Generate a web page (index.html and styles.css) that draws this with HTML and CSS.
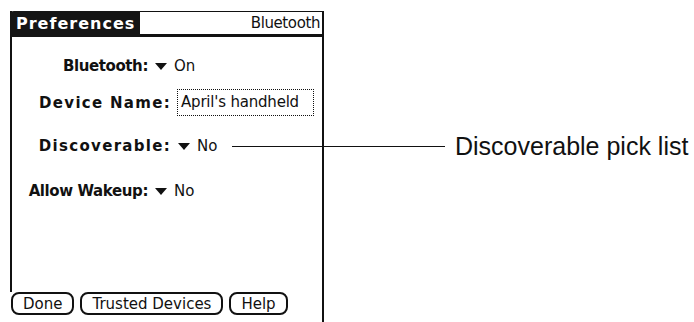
FILE: index.html
```html
<!DOCTYPE html>
<html>
  <head>
    <title>Preferences - Bluetooth</title>
    <link rel="stylesheet" href="styles.css">
  </head>
  <body>
    <div class="page">
      <div class="device">
        <section class="screen">
          <header class="titlebar">
            <h1 class="tab">Preferences</h1>
            <p class="app-name">Bluetooth</p>
          </header>

          <div class="fields">
            <div class="row row-bluetooth">
              <span class="label narrow">Bluetooth:</span>
              <svg class="arrow" width="12" height="7" viewBox="0 0 12 7"><path d="M0 0h12L6 7z"/></svg>
              <span class="value">On</span>
            </div>
            <div class="row row-name">
              <span class="label">Device Name:</span>
              <span class="textbox">April's handheld</span>
            </div>
            <div class="row row-disc">
              <span class="label">Discoverable:</span>
              <svg class="arrow" width="12" height="7" viewBox="0 0 12 7"><path d="M0 0h12L6 7z"/></svg>
              <span class="value">No</span>
              <span class="leader"></span>
            </div>
            <div class="row row-wake">
              <span class="label narrow">Allow Wakeup:</span>
              <svg class="arrow" width="12" height="7" viewBox="0 0 12 7"><path d="M0 0h12L6 7z"/></svg>
              <span class="value">No</span>
            </div>
          </div>
        </section>

        <footer class="buttons">
          <button>Done</button>
          <button>Trusted Devices</button>
          <button>Help</button>
        </footer>
      </div>

      <div class="callout">
        <span class="callout-line"></span>
        <span class="callout-text">Discoverable pick list</span>
      </div>
    </div>
  </body>
</html>
```

FILE: styles.css
```css
body {
    margin: 0;
    padding: 0;
    background: #fff;
    color: #111;
    font-family: "DejaVu Sans", sans-serif;
}

.page {
    display: flex;
    padding: 11px 0 0 10px;
    height: 311px;
}

.device {
    display: flex;
    flex-direction: column;
    width: 312px;
    border-right: 2px solid #111;
}

.screen {
    flex: 1;
    display: flex;
    flex-direction: column;
    border-left: 2px solid #111;
}

.titlebar {
    display: flex;
    height: 26px;
}

.tab {
    margin: 0 0 0 -2px;
    width: 130px;
    background: #151515;
    color: #fff;
    font-size: 16px;
    font-weight: bold;
    letter-spacing: 1px;
    line-height: 26px;
    padding-left: 6px;
    border-top-left-radius: 4px;
    box-sizing: border-box;
}

.app-name {
    flex: 1;
    margin: 0;
    border-top: 1px solid #111;
    border-bottom: 3px solid #111;
    text-align: right;
    font-size: 15px;
    letter-spacing: -0.4px;
    line-height: 22px;
    padding-right: 2px;
}

.fields {
    flex: 1;
    display: flex;
    flex-direction: column;
}

.row {
    display: flex;
    align-items: center;
    height: 20px;
}
.row-bluetooth {
    margin-top: 19px;
}
.row-name {
    margin-top: 13px;
    height: 27px;
}
.row-disc {
    margin-top: 20px;
}
.row-wake {
    margin-top: 25px;
}

.label {
    width: 159px;
    text-align: right;
    font-size: 15px;
    font-weight: bold;
    letter-spacing: 1.3px;
    white-space: nowrap;
}
.label.narrow {
    width: 136px;
    letter-spacing: -0.4px;
}

.arrow {
    margin-left: 7px;
    fill: #111;
}

.value {
    margin-left: 7px;
    font-size: 15px;
}

.textbox {
    margin-left: 6px;
    width: 137px;
    height: 27px;
    box-sizing: border-box;
    border: 1px dotted #111;
    font-size: 15px;
    letter-spacing: -0.2px;
    line-height: 25px;
    padding-left: 3px;
    white-space: nowrap;
}

.leader {
    flex: 1;
    height: 1px;
    margin-left: 15px;
    background: #111;
}

.buttons {
    display: flex;
    gap: 6px;
    height: 23px;
    margin: 0 0 7px 1px;
}

.buttons button {
    margin: 0;
    padding: 0 10px;
    height: 23px;
    background: #fff;
    border: 2px solid #111;
    border-radius: 8px;
    font-family: "DejaVu Sans", sans-serif;
    font-size: 15px;
    color: #111;
}

.callout {
    display: flex;
    align-items: center;
    align-self: flex-start;
    margin-top: 120px;
    height: 30px;
}

.callout-line {
    width: 121px;
    height: 1px;
    background: #111;
}

.callout-text {
    margin-left: 10px;
    font-family: "Liberation Sans", Arial, sans-serif;
    font-size: 25px;
    white-space: nowrap;
}
```
